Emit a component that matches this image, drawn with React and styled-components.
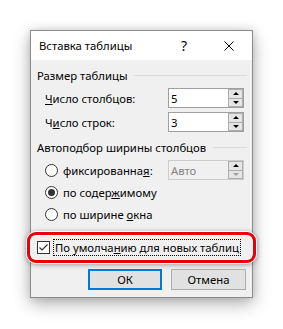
import styled, { createGlobalStyle } from "styled-components";

const Global = createGlobalStyle`
  html, body {
    margin: 0;
    padding: 0;
    background: #ffffff;
  }
  body {
    font-family: "Noto Sans", "Liberation Sans", sans-serif;
    font-size: 11.3px;
    color: #000;
  }
`;

const Page = styled.div`
  width: 283px;
  height: 329px;
  padding: 30px 0 0 30px;
  box-sizing: border-box;
`;

const Dialog = styled.div`
  width: 223px;
  box-sizing: border-box;
  border: 1px solid #8a8a8a;
  background: #f0f0f0;
  box-shadow: 0 6px 16px rgba(0, 0, 0, 0.3), 0 0 8px rgba(0, 0, 0, 0.12);
  display: flex;
  flex-direction: column;
`;

const TitleBar = styled.div`
  height: 29px;
  background: #fff;
  display: flex;
  align-items: center;
  padding-left: 8px;
`;

const Title = styled.span`
  flex: 1;
  line-height: 1;
`;

const Help = styled.span`
  width: 6px;
  margin-right: 37px;
  font-size: 14px;
  line-height: 1;
`;

const Close = styled.svg`
  width: 10px;
  height: 10px;
  margin-right: 18px;
`;

const Body = styled.div`
  display: flex;
  flex-direction: column;
  padding: 0 0 7px;
`;

const GroupHeader = styled.div`
  height: 20px;
  margin-top: 5px;
  padding-left: 6px;
  padding-right: 5px;
  display: flex;
  align-items: center;
  gap: 7px;
  &::after {
    content: "";
    flex: 1;
    height: 1px;
    background: #dcdcdc;
  }
`;

const FieldRow = styled.div`
  height: 20px;
  margin-top: ${(p) => p.$top}px;
  padding-left: 14px;
  display: flex;
  align-items: center;
`;

const Label = styled.span`
  width: 123px;
`;

const Spin = styled.div`
  width: 76px;
  height: 20px;
  box-sizing: border-box;
  border: 1px solid ${(p) => (p.$disabled ? "#cccccc" : "#a0a0a0")};
  background: ${(p) => (p.$disabled ? "#f0f0f0" : "#fff")};
  color: ${(p) => (p.$disabled ? "#838383" : "#000")};
  display: flex;
  align-items: center;
  padding-left: 2px;
`;

const SpinValue = styled.span`
  flex: 1;
`;

const SpinButtons = styled.div`
  width: 15px;
  height: 18px;
  display: flex;
  flex-direction: column;
`;

const SpinButton = styled.div`
  flex: 1;
  box-sizing: border-box;
  border: 1px solid #adadad;
  background: #e5e5e5;
  display: flex;
  align-items: center;
  justify-content: center;
  & + & {
    border-top: none;
  }
`;

const Arrow = styled.div`
  width: 0;
  height: 0;
  border-left: 3px solid transparent;
  border-right: 3px solid transparent;
  ${(p) =>
    p.$up
      ? `border-bottom: 3px solid ${p.$color};`
      : `border-top: 3px solid ${p.$color};`}
`;

const OptionRow = styled.div`
  height: 22px;
  margin-top: ${(p) => p.$top || 0}px;
  padding-left: 14px;
  display: flex;
  align-items: center;
`;

const Radio = styled.span`
  width: 13px;
  height: 13px;
  box-sizing: border-box;
  border-radius: 50%;
  border: 1px solid #333;
  background: #fff;
  margin-right: 5px;
  display: flex;
  align-items: center;
  justify-content: center;
  &::after {
    content: "";
    width: 7px;
    height: 7px;
    border-radius: 50%;
    background: ${(p) => (p.$checked ? "#333" : "transparent")};
  }
`;

const OptionLabel = styled.span`
  width: 105px;
`;

const Highlight = styled.div`
  margin: 7px -4px 0;
  height: 31px;
  box-sizing: border-box;
  border: 3px solid #e8000b;
  border-radius: 9px;
  box-shadow: inset 0 0 0 1px #fff, 0 0 0 1px #fff, 0 1px 5px 1px rgba(0, 0, 0, 0.35);
  display: flex;
  align-items: center;
  padding-left: 7px;
`;

const CheckBox = styled.svg`
  width: 13px;
  height: 13px;
  margin-right: 3px;
`;

const FocusLabel = styled.span`
  border: 1px dotted #000;
  padding: 0 1px;
  height: 15px;
  display: flex;
  align-items: center;
`;

const Buttons = styled.div`
  margin-top: 6px;
  padding-right: 6px;
  display: flex;
  justify-content: flex-end;
  gap: 9px;
`;

const Button = styled.div`
  width: ${(p) => p.$w}px;
  height: 21px;
  box-sizing: border-box;
  background: #e1e1e1;
  border: ${(p) => (p.$default ? "2px solid #0078d7" : "1px solid #adadad")};
  display: flex;
  align-items: center;
  justify-content: center;
`;

function SpinBox({ value, disabled }) {
  return (
    <Spin $disabled={disabled}>
      <SpinValue>{value}</SpinValue>
      <SpinButtons>
        <SpinButton>
          <Arrow $up $color="#000" />
        </SpinButton>
        <SpinButton>
          <Arrow $color={disabled ? "#a0a0a0" : "#000"} />
        </SpinButton>
      </SpinButtons>
    </Spin>
  );
}

export default function App() {
  return (
    <Page>
      <Global />
      <Dialog>
        <TitleBar>
          <Title>Вставка таблицы</Title>
          <Help>?</Help>
          <Close viewBox="0 0 10 10">
            <path d="M0.5 0.5 L9.5 9.5 M9.5 0.5 L0.5 9.5" stroke="#000" strokeWidth="1" />
          </Close>
        </TitleBar>
        <Body>
          <GroupHeader>Размер таблицы</GroupHeader>
          <FieldRow $top={3}>
            <Label>
              <u>Ч</u>исло столбцов:
            </Label>
            <SpinBox value="5" />
          </FieldRow>
          <FieldRow $top={4}>
            <Label>
              Ч<u>и</u>сло строк:
            </Label>
            <SpinBox value="3" />
          </FieldRow>
          <GroupHeader>Автоподбор ширины столбцов</GroupHeader>
          <OptionRow $top={2}>
            <Radio />
            <OptionLabel>
              фиксированна<u>я</u>:
            </OptionLabel>
            <SpinBox value="Авто" disabled />
          </OptionRow>
          <OptionRow>
            <Radio $checked />
            <span>
              по содер<u>ж</u>имому
            </span>
          </OptionRow>
          <OptionRow>
            <Radio />
            <span>
              по ширине <u>о</u>кна
            </span>
          </OptionRow>
          <Highlight>
            <CheckBox viewBox="0 0 13 13">
              <rect x="0.5" y="0.5" width="12" height="12" fill="#fff" stroke="#333" />
              <path d="M2.5 6.5 L5 9 L10.5 3.5" fill="none" stroke="#333" strokeWidth="1.2" />
            </CheckBox>
            <FocusLabel>
              По умолча<u>н</u>ию для новых таблиц
            </FocusLabel>
          </Highlight>
          <Buttons>
            <Button $w={74} $default>
              ОК
            </Button>
            <Button $w={75}>Отмена</Button>
          </Buttons>
        </Body>
      </Dialog>
    </Page>
  );
}
